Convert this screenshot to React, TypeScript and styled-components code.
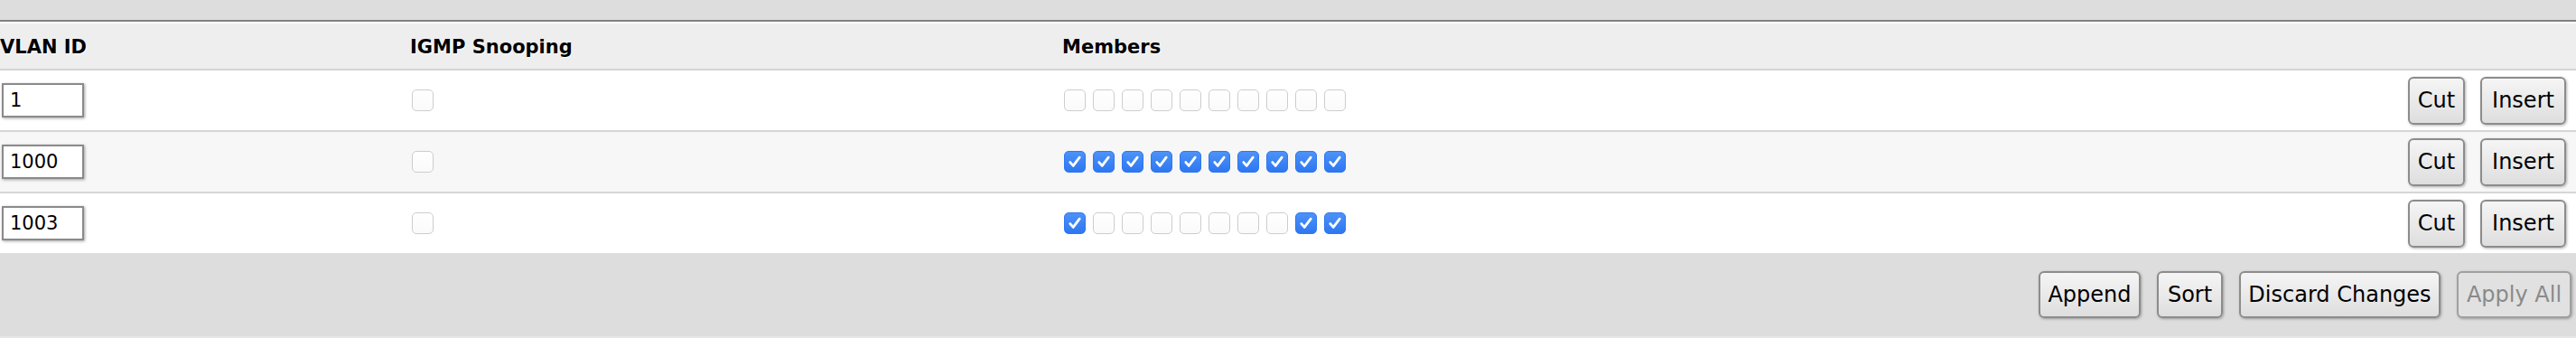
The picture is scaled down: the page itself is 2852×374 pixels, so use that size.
import * as React from "react";
import styled, { createGlobalStyle, css } from "styled-components";

const GlobalStyle = createGlobalStyle`
  html, body {
    margin: 0;
    padding: 0;
    background: #ffffff;
    font-family: "DejaVu Sans", Verdana, sans-serif;
  }
`;

interface Vlan {
  id: string;
  igmp: boolean;
  members: boolean[];
}

const vlans: Vlan[] = [
  { id: "1", igmp: false, members: Array(10).fill(false) },
  { id: "1000", igmp: false, members: Array(10).fill(true) },
  {
    id: "1003",
    igmp: false,
    members: [true, false, false, false, false, false, false, false, true, true],
  },
];

const Page = styled.div`
  width: 100%;
  overflow: hidden;
`;

const TopBand = styled.div`
  height: 22px;
  background: #dddddd;
  border-bottom: 2px solid #808080;
`;

const Table = styled.div`
  border-top: 2px solid #ffffff;
  display: flex;
  flex-direction: column;
`;

const gridCols = css`
  display: grid;
  grid-template-columns: 454px 722px 1fr auto;
  align-items: center;
`;

const HeaderRow = styled.div`
  ${gridCols};
  height: 52px;
  padding-top: 2px;
  box-sizing: border-box;
  background: #eeeeee;
  border-bottom: 2px solid #d4d4d4;
`;

const HeadCell = styled.div`
  font-size: 21px;
  font-weight: bold;
  color: #000000;
  text-shadow: 1px 1px 1px #ffffff;
  white-space: nowrap;
`;

const Row = styled.div<{ $striped?: boolean; $last?: boolean }>`
  ${gridCols};
  height: 66px;
  background: ${(p) => (p.$striped ? "#f7f7f7" : "#ffffff")};
  border-bottom: ${(p) => (p.$last ? "none" : "2px solid #d6d6d6")};
  padding-right: 11px;
`;

const IdInput = styled.input`
  margin-left: 2px;
  width: 91px;
  height: 38px;
  box-sizing: border-box;
  border: 2px solid #8a8a8a;
  border-radius: 0;
  padding: 0 0 0 7px;
  font-family: "DejaVu Sans", Verdana, sans-serif;
  font-size: 21px;
  color: #000000;
  background: #ffffff;
  box-shadow: 1px 1px 3px rgba(0, 0, 0, 0.35);
  outline: none;
`;

const BoxGroup = styled.div`
  display: flex;
  gap: 8px;
  margin-left: 2px;
`;

const Box = styled.span<{ $checked?: boolean }>`
  width: 24px;
  height: 24px;
  box-sizing: border-box;
  border-radius: 5px;
  display: flex;
  align-items: center;
  justify-content: center;
  ${(p) =>
    p.$checked
      ? css`
          background: linear-gradient(#4d92f9, #2d77f1);
          border: 1px solid #2f78ee;
        `
      : css`
          background: linear-gradient(#ffffff, #fafafa);
          border: 1.5px solid #cdcdcd;
        `}
`;

const Actions = styled.div`
  display: flex;
  gap: 17px;
  justify-content: flex-end;
`;

const Footer = styled.div`
  height: 92px;
  background: #dddddd;
  border-bottom: 2px solid #e6e6e6;
  display: flex;
  align-items: center;
  justify-content: flex-end;
  gap: 18px;
  padding-right: 5px;
  box-sizing: content-box;
`;

const Button = styled.button<{ $w: number; $h?: number }>`
  width: ${(p) => p.$w}px;
  height: ${(p) => p.$h ?? 52}px;
  padding: 0;
  border: 2px solid #8c8c8c;
  border-radius: 6px;
  background: linear-gradient(#f5f5f5, #dedede);
  box-shadow: 1px 1px 3px rgba(0, 0, 0, 0.3);
  font-family: "DejaVu Sans", Verdana, sans-serif;
  font-size: 24px;
  line-height: 1;
  color: #000000;
  white-space: nowrap;
  cursor: pointer;

  &:disabled {
    color: #8a8a8a;
    border-color: #a0a0a0;
    background: #e1e1e1;
    cursor: default;
  }
`;

const Check: React.FC<{ checked: boolean }> = ({ checked }) => (
  <Box $checked={checked}>
    {checked && (
      <svg width="18" height="18" viewBox="0 0 18 18">
        <path
          d="M3.8 9.6 L7.2 13.4 L14.2 4.2"
          fill="none"
          stroke="#ffffff"
          strokeWidth="2.8"
          strokeLinecap="round"
          strokeLinejoin="round"
        />
      </svg>
    )}
  </Box>
);

export default function App() {
  return (
    <Page>
      <GlobalStyle />
      <TopBand />
      <Table>
        <HeaderRow>
          <HeadCell>VLAN ID</HeadCell>
          <HeadCell>IGMP Snooping</HeadCell>
          <HeadCell>Members</HeadCell>
          <div />
        </HeaderRow>
        {vlans.map((v, i) => (
          <Row key={v.id} $striped={i % 2 === 1} $last={i === vlans.length - 1}>
            <div>
              <IdInput defaultValue={v.id} />
            </div>
            <BoxGroup>
              <Check checked={v.igmp} />
            </BoxGroup>
            <BoxGroup>
              {v.members.map((m, j) => (
                <Check key={j} checked={m} />
              ))}
            </BoxGroup>
            <Actions>
              <Button $w={63} $h={53}>Cut</Button>
              <Button $w={95} $h={53}>Insert</Button>
            </Actions>
          </Row>
        ))}
      </Table>
      <Footer>
        <Button $w={113}>Append</Button>
        <Button $w={73}>Sort</Button>
        <Button $w={223}>Discard Changes</Button>
        <Button $w={127} disabled>
          Apply All
        </Button>
      </Footer>
    </Page>
  );
}
